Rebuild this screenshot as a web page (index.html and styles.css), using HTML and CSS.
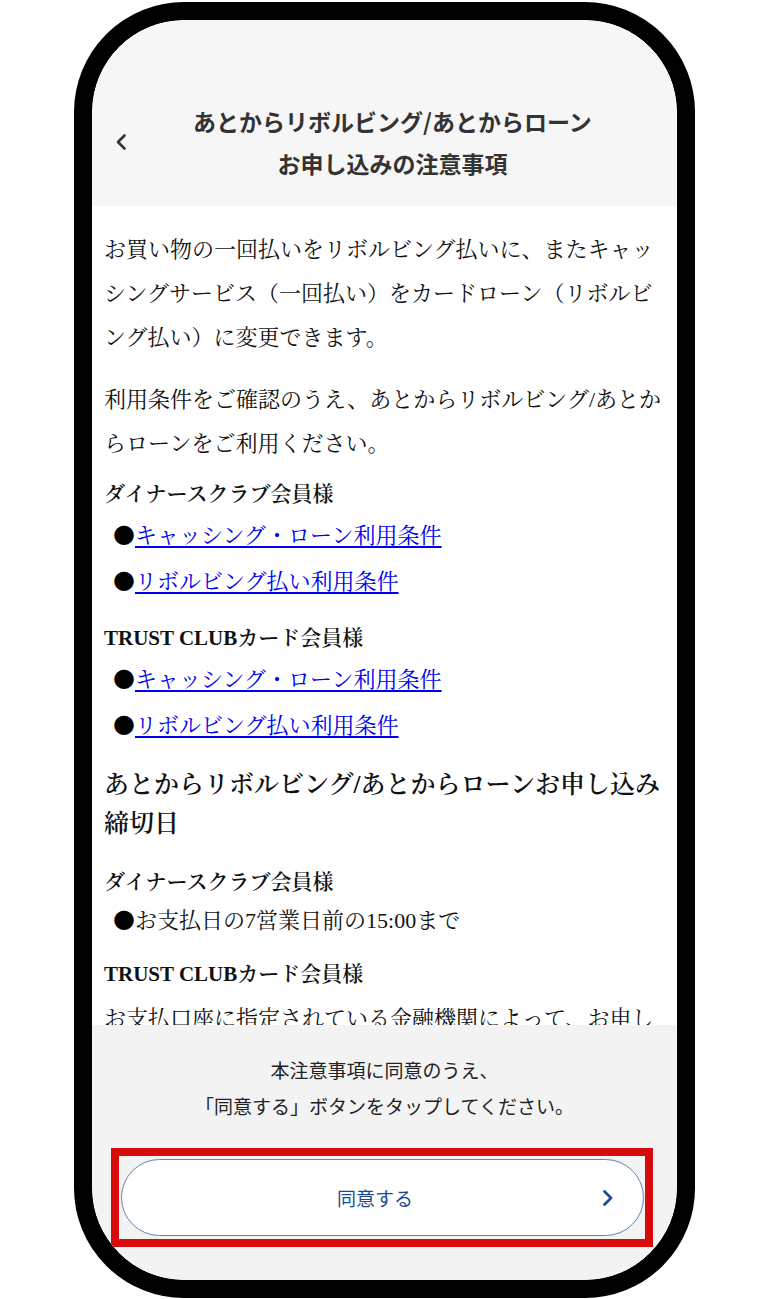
FILE: index.html
```html
<!DOCTYPE html>
<html lang="ja">
<head>
<meta charset="utf-8">
<title>あとからリボルビング/あとからローン お申し込みの注意事項</title>
<link rel="stylesheet" href="styles.css">
</head>
<body>
<div class="phone">
  <div class="screen">
    <header class="topbar">
      <button class="back" aria-label="戻る">
        <svg width="12" height="18" viewBox="0 0 12 18"><path d="M9.5 2.5 L3 9 L9.5 15.5" fill="none" stroke="#333" stroke-width="2.6" stroke-linecap="round" stroke-linejoin="round"/></svg>
      </button>
      <h1 class="title">あとからリボルビング/あとからローン<br>お申し込みの注意事項</h1>
      <span class="spacer"></span>
    </header>
    <main class="content">
      <p class="lead">お買い物の一回払いをリボルビング払いに、またキャッシングサービス（一回払い）をカードローン（リボルビング払い）に変更できます。</p>
      <p class="lead">利用条件をご確認のうえ、あとからリボルビング/あとからローンをご利用ください。</p>
      <h3 class="sub first">ダイナースクラブ会員様</h3>
      <ul class="items">
        <li><span class="dot">●</span><a href="#">キャッシング・ローン利用条件</a></li>
        <li><span class="dot">●</span><a href="#">リボルビング払い利用条件</a></li>
      </ul>
      <h3 class="sub">TRUST CLUBカード会員様</h3>
      <ul class="items">
        <li><span class="dot">●</span><a href="#">キャッシング・ローン利用条件</a></li>
        <li><span class="dot">●</span><a href="#">リボルビング払い利用条件</a></li>
      </ul>
      <h2 class="section">あとからリボルビング/あとからローンお申し込み締切日</h2>
      <h3 class="sub after-section">ダイナースクラブ会員様</h3>
      <ul class="items">
        <li class="plain"><span class="dot">●</span>お支払日の7営業日前の15:00まで</li>
      </ul>
      <h3 class="sub">TRUST CLUBカード会員様</h3>
      <p class="lead">お支払口座に指定されている金融機関によって、お申し込み締切日が異なります。</p>
    </main>
    <footer class="agree">
      <p class="agree-text">本注意事項に同意のうえ、<br>「同意する」ボタンをタップしてください。</p>
      <div class="highlight">
        <button class="agree-btn">
          <span class="agree-label">同意する</span>
          <svg width="16" height="18" viewBox="0 0 16 18"><path d="M4.5 2.5 L11 9 L4.5 15.5" fill="none" stroke="#1b4c8f" stroke-width="2.8" stroke-linecap="round" stroke-linejoin="round"/></svg>
        </button>
      </div>
    </footer>
  </div>
</div>
</body>
</html>
```

FILE: styles.css
```css
* { box-sizing: border-box; }

html, body {
  margin: 0;
  padding: 0;
  background: #ffffff;
}

body {
  width: 768px;
  height: 1299px;
  overflow: hidden;
}

.phone {
  margin: 2px 0 0 74px;
  width: 621px;
  height: 1296px;
  border: 18px solid #000;
  border-radius: 110px;
  background: #000;
  overflow: hidden;
}

.screen {
  width: 100%;
  height: 100%;
  border-radius: 92px;
  overflow: hidden;
  display: flex;
  flex-direction: column;
  background: #f3f3f3;
}

.topbar {
  flex: 0 0 186px;
  background: #f6f6f6;
  display: grid;
  grid-template-columns: 48px 1fr 32px;
  align-items: center;
  padding: 80px 0 22px;
}

.back {
  border: 0;
  background: none;
  padding: 0 0 0 23px;
  margin: 0;
  display: flex;
  align-items: center;
  height: 20px;
}

.title {
  margin: 0;
  text-align: center;
  font-family: "Noto Sans CJK JP", "Noto Sans", sans-serif;
  font-weight: 600;
  font-size: 23px;
  line-height: 42px;
  color: #333;
  letter-spacing: 0;
}

.content {
  flex: 1 1 auto;
  min-height: 0;
  overflow: hidden;
  background: #fff;
  padding: 22px 13px 0 12px;
  font-family: "Liberation Serif", "Noto Serif CJK JP", "Noto Sans CJK JP", serif;
  color: #111;
  font-size: 22px;
}

.lead {
  margin: 0;
  line-height: 44px;
}

.lead + .lead {
  margin-top: 18px;
}

.sub {
  margin: 18px 0 0;
  font-size: 21px;
  line-height: 34px;
  font-weight: 600;
}

.sub.first { margin-top: 11px; }
.sub.after-section { margin-top: 22px; }

.items {
  list-style: none;
  margin: 0;
  padding: 0;
}

.items li {
  height: 46px;
  line-height: 46px;
  padding-left: 9px;
}

.items li.plain {
  height: 40px;
  line-height: 40px;
}

.dot {
  font-family: "Noto Serif CJK JP", "Noto Sans CJK JP", serif;
  color: #000;
}

.items a {
  color: #0000ee;
  text-decoration: underline;
  text-underline-offset: 3px;
}

.section {
  margin: 18px 0 0;
  font-size: 25px;
  line-height: 39px;
  font-weight: 600;
}

.sub + .lead { margin-top: 6px; }

.agree {
  flex: 0 0 255px;
  background: #f3f3f3;
  padding-top: 27px;
  font-family: "Noto Sans CJK JP", "Noto Sans", sans-serif;
}

.agree-text {
  margin: 0;
  text-align: center;
  font-size: 19px;
  line-height: 36px;
  color: #222;
}

.highlight {
  margin: 24px 0 0 19px;
  width: 542px;
  border: 8px solid #d70b0b;
  padding: 3px 1px 3px 2px;
}

.agree-btn {
  width: 523px;
  height: 77px;
  margin: 0;
  border: 1.5px solid #5a86bb;
  border-radius: 40px;
  background: #fff;
  display: flex;
  align-items: center;
  padding: 0 27px 0 28px;
  font-family: "Noto Sans CJK JP", "Noto Sans", sans-serif;
}

.agree-label {
  flex: 1 1 auto;
  text-align: center;
  font-size: 19px;
  color: #1b4c8f;
}
```
